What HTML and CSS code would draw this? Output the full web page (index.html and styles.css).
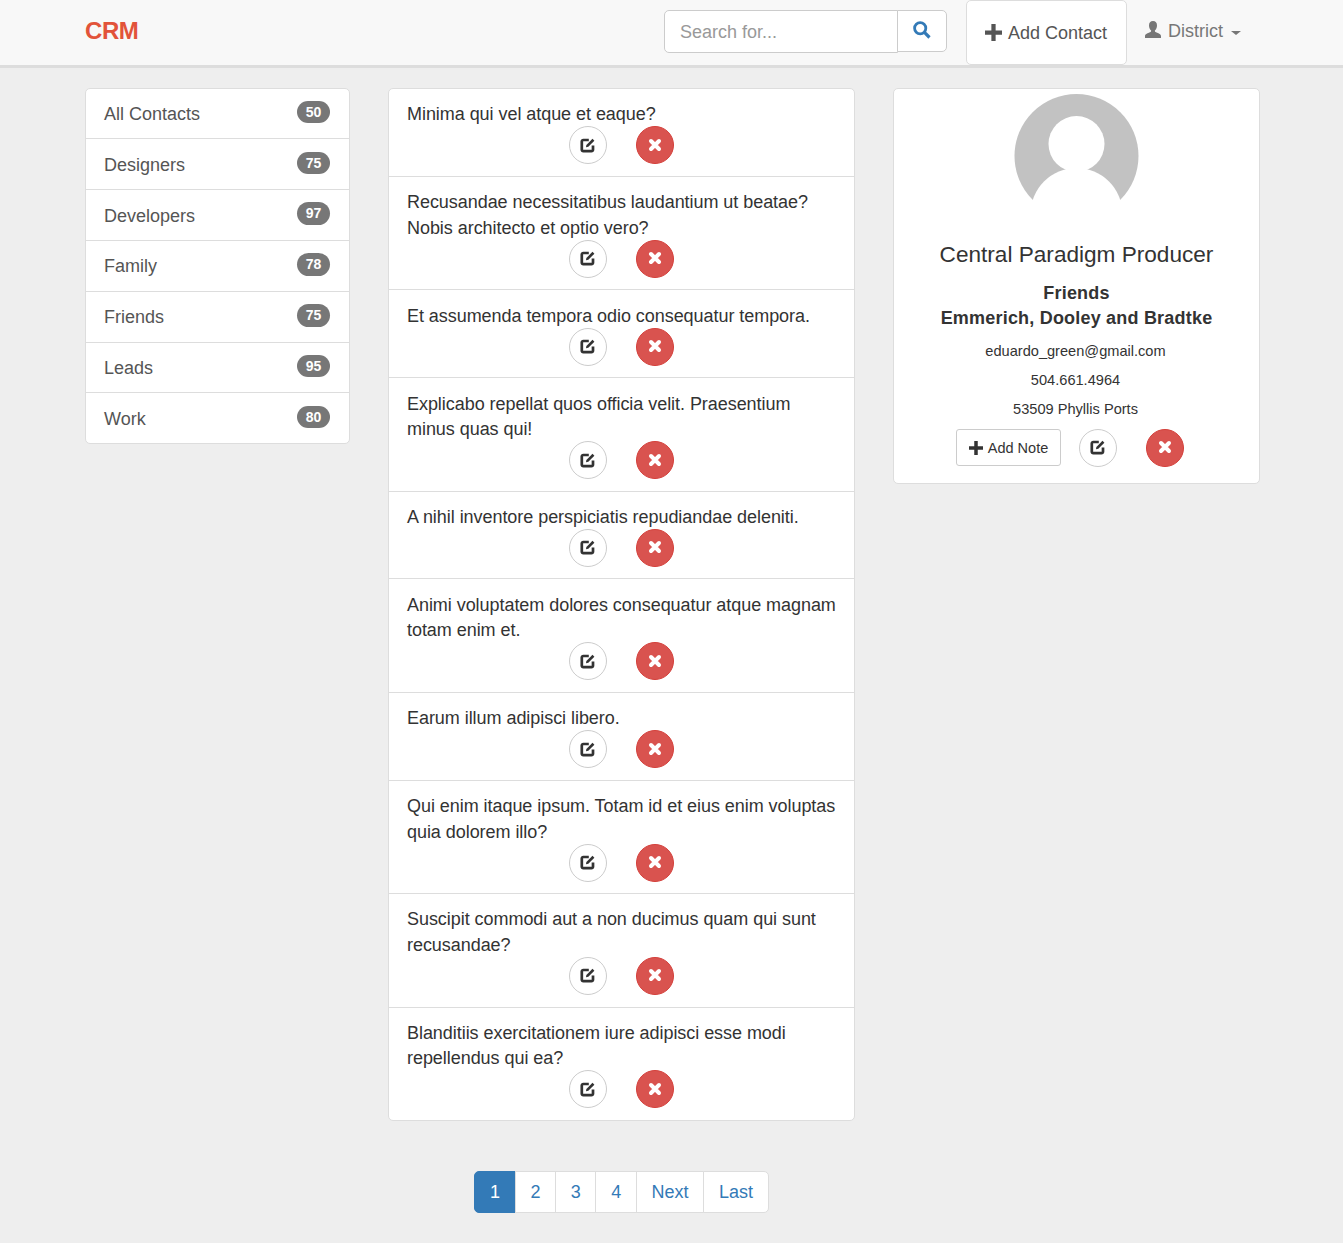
FILE: index.html
```html
<!DOCTYPE html>
<html lang="en">
<head>
<meta charset="utf-8">
<title>CRM</title>
<link rel="stylesheet" href="styles.css">
</head>
<body>
<svg class="sprites" width="0" height="0" aria-hidden="true">
  <symbol id="i-edit" viewBox="0 0 16 16">
    <path d="M8.800 3H3.300A1.500 1.500 0 0 0 1.800 4.500v8.200a1.500 1.500 0 0 0 1.500 1.500h8.200a1.500 1.500 0 0 0 1.500-1.500V8.500" fill="none" stroke="currentColor" stroke-width="2.700"/>
    <path d="M6 10.200l.4-2.300 6.100-6.100 1.900 1.900-6.100 6.100z" fill="currentColor"/>
  </symbol>
  <symbol id="i-x" viewBox="0 0 14 14">
    <path d="M3 3l8 8M11 3l-8 8" fill="none" stroke="currentColor" stroke-width="4" stroke-linecap="round"/>
  </symbol>
  <symbol id="i-plus" viewBox="0 0 16 16">
    <path d="M6 0h4v6h6v4h-6v6H6v-6H0V6h6z" fill="currentColor"/>
  </symbol>
  <symbol id="i-user" viewBox="0 0 18 18">
    <path d="M9 0c2.600 0 4 1.800 4 4.400 0 2-.8 3.900-1.900 4.900-.4.4-.3 1.200.3 1.600 1.800 1 5.600 1.600 5.600 4V17H1v-2.100c0-2.400 3.800-3 5.600-4 .6-.4.7-1.200.3-1.600C5.800 8.300 5 6.400 5 4.400 5 1.800 6.400 0 9 0z" fill="currentColor"/>
  </symbol>
  <symbol id="i-search" viewBox="0 0 18 18">
    <circle cx="7.200" cy="7.200" r="5.600" fill="none" stroke="currentColor" stroke-width="2.800"/>
    <path d="M11.200 11.200l5.300 5.300" fill="none" stroke="currentColor" stroke-width="3.200"/>
  </symbol>
</svg>

<header class="navbar">
  <a class="brand">CRM</a>
  <form class="search">
    <input class="search-input" type="text" placeholder="Search for...">
    <button class="search-btn" type="button"><svg class="icon-search"><use href="#i-search"/></svg></button>
  </form>
  <a class="add-contact"><svg class="icon-plus"><use href="#i-plus"/></svg>Add Contact</a>
  <a class="user-menu"><svg class="icon-user"><use href="#i-user"/></svg>District<span class="caret"></span></a>
</header>

<main class="layout">
  <ul class="groups">
    <li class="group"><span>All Contacts</span><span class="badge">50</span></li>
    <li class="group"><span>Designers</span><span class="badge">75</span></li>
    <li class="group"><span>Developers</span><span class="badge">97</span></li>
    <li class="group"><span>Family</span><span class="badge">78</span></li>
    <li class="group"><span>Friends</span><span class="badge">75</span></li>
    <li class="group"><span>Leads</span><span class="badge">95</span></li>
    <li class="group"><span>Work</span><span class="badge">80</span></li>
  </ul>

  <section class="center">
    <ul class="notes">
      <li class="note"><p>Minima qui vel atque et eaque?</p><div class="actions"><button class="circle edit" type="button"><svg class="icon-edit"><use href="#i-edit"/></svg></button><button class="circle del" type="button"><svg class="icon-x"><use href="#i-x"/></svg></button></div></li>
      <li class="note"><p>Recusandae necessitatibus laudantium ut beatae? Nobis architecto et optio vero?</p><div class="actions"><button class="circle edit" type="button"><svg class="icon-edit"><use href="#i-edit"/></svg></button><button class="circle del" type="button"><svg class="icon-x"><use href="#i-x"/></svg></button></div></li>
      <li class="note"><p>Et assumenda tempora odio consequatur tempora.</p><div class="actions"><button class="circle edit" type="button"><svg class="icon-edit"><use href="#i-edit"/></svg></button><button class="circle del" type="button"><svg class="icon-x"><use href="#i-x"/></svg></button></div></li>
      <li class="note"><p>Explicabo repellat quos officia velit. Praesentium minus quas qui!</p><div class="actions"><button class="circle edit" type="button"><svg class="icon-edit"><use href="#i-edit"/></svg></button><button class="circle del" type="button"><svg class="icon-x"><use href="#i-x"/></svg></button></div></li>
      <li class="note"><p>A nihil inventore perspiciatis repudiandae deleniti.</p><div class="actions"><button class="circle edit" type="button"><svg class="icon-edit"><use href="#i-edit"/></svg></button><button class="circle del" type="button"><svg class="icon-x"><use href="#i-x"/></svg></button></div></li>
      <li class="note"><p>Animi voluptatem dolores consequatur atque magnam totam enim et.</p><div class="actions"><button class="circle edit" type="button"><svg class="icon-edit"><use href="#i-edit"/></svg></button><button class="circle del" type="button"><svg class="icon-x"><use href="#i-x"/></svg></button></div></li>
      <li class="note"><p>Earum illum adipisci libero.</p><div class="actions"><button class="circle edit" type="button"><svg class="icon-edit"><use href="#i-edit"/></svg></button><button class="circle del" type="button"><svg class="icon-x"><use href="#i-x"/></svg></button></div></li>
      <li class="note"><p>Qui enim itaque ipsum. Totam id et eius enim voluptas quia dolorem illo?</p><div class="actions"><button class="circle edit" type="button"><svg class="icon-edit"><use href="#i-edit"/></svg></button><button class="circle del" type="button"><svg class="icon-x"><use href="#i-x"/></svg></button></div></li>
      <li class="note"><p>Suscipit commodi aut a non ducimus quam qui sunt recusandae?</p><div class="actions"><button class="circle edit" type="button"><svg class="icon-edit"><use href="#i-edit"/></svg></button><button class="circle del" type="button"><svg class="icon-x"><use href="#i-x"/></svg></button></div></li>
      <li class="note"><p>Blanditiis exercitationem iure adipisci esse modi repellendus qui ea?</p><div class="actions"><button class="circle edit" type="button"><svg class="icon-edit"><use href="#i-edit"/></svg></button><button class="circle del" type="button"><svg class="icon-x"><use href="#i-x"/></svg></button></div></li>
    </ul>
    <nav class="pagination">
      <a class="page active">1</a><a class="page">2</a><a class="page">3</a><a class="page">4</a><a class="page">Next</a><a class="page">Last</a>
    </nav>
  </section>

  <aside class="card">
    <svg class="avatar" viewBox="0 0 125 125" role="img" aria-label="avatar">
      <circle cx="62.500" cy="62" r="62" fill="#c2c2c2"/>
      <circle cx="62.500" cy="50" r="28" fill="#fff"/>
      <circle cx="62.500" cy="120" r="46" fill="#fff"/>
    </svg>
    <h3 class="title">Central Paradigm Producer</h3>
    <p class="strong">Friends<br>Emmerich, Dooley and Bradtke</p>
    <p class="detail">eduardo_green@gmail.com</p>
    <p class="detail">504.661.4964</p>
    <p class="detail">53509 Phyllis Ports</p>
    <div class="card-actions">
      <button class="add-note" type="button"><svg class="icon-plus-sm"><use href="#i-plus"/></svg>Add Note</button>
      <button class="circle edit" type="button"><svg class="icon-edit"><use href="#i-edit"/></svg></button>
      <button class="circle del" type="button"><svg class="icon-x"><use href="#i-x"/></svg></button>
    </div>
  </aside>
</main>
</body>
</html>
```
FILE: styles.css
```css
* { box-sizing: border-box; }
html, body { margin: 0; padding: 0; }
body {
  background: #eee;
  color: #333;
  font-family: "Liberation Sans", Arial, sans-serif;
  font-size: 18px;
  line-height: 1.42857;
}
.sprites { position: absolute; }
button { font-family: inherit; cursor: pointer; }
ul { list-style: none; margin: 0; padding: 0; }
p { margin: 0; }

.navbar {
  display: flex;
  align-items: flex-start;
  height: 68px;
  padding: 0 102px 0 85px;
  background: #f8f8f8;
  border-bottom: 3px solid #ddd;
}
.brand {
  margin-right: auto;
  padding-top: 16px;
  color: #e2533a;
  font-size: 24px;
  font-weight: 700;
  line-height: 30px;
  letter-spacing: -.4px;
}
.search { display: flex; align-items: flex-start; margin-top: 10px; }
.search-input {
  width: 234px;
  height: 43px;
  padding: 2px 15px 0;
  border: 1px solid #ccc;
  border-radius: 5px 0 0 5px;
  background: #fff;
  color: #555;
  font: inherit;
  outline: 0;
}
.search-input::placeholder { color: #999; opacity: 1; }
.search-btn {
  display: flex;
  align-items: center;
  justify-content: center;
  width: 50px;
  height: 42px;
  margin-left: -1px;
  padding: 0 0 2px;
  border: 1px solid #ccc;
  border-radius: 0 5px 5px 0;
  background: #fff;
  color: #337ab7;
}
.icon-search { width: 18px; height: 18px; }
.add-contact {
  display: flex;
  align-items: center;
  width: 161px;
  height: 65px;
  margin-left: 19px;
  padding: 2px 0 0 18px;
  background: #fff;
  border: 1px solid #ddd;
  border-radius: 5px;
  color: #555;
}
.icon-plus { width: 17px; height: 17px; margin: -2px 6px 0 0; }
.user-menu {
  display: flex;
  align-items: center;
  height: 63px;
  margin-left: 17px;
  color: #777;
}
.icon-user { width: 18px; height: 18px; margin: -3px 6px 0 0; }
.caret {
  width: 0;
  height: 0;
  margin: 2px 0 0 8px;
  border-top: 4px solid #777;
  border-left: 5px solid transparent;
  border-right: 5px solid transparent;
}

.layout {
  display: grid;
  grid-template-columns: 265px 467px 367px;
  column-gap: 38px;
  align-items: start;
  padding: 19.600px 0 30px 85px;
}

.groups, .notes, .card {
  background: #fff;
  border: 1px solid #ddd;
  border-radius: 5px;
}
.group {
  display: flex;
  justify-content: space-between;
  align-items: flex-start;
  padding: 13.400px 19px 10.700px 18px;
  color: #555;
  border-top: 1px solid #ddd;
}
.group:first-child { border-top: 0; }
.badge {
  margin-top: -1.100px;
  min-width: 33px;
  padding: 4px 8.500px;
  border-radius: 12px;
  background: #777;
  color: #fff;
  font-size: 14px;
  font-weight: 700;
  line-height: 14.500px;
  text-align: center;
}

.center { padding-top: .56px; }
.note {
  padding: 12px 15px 11.640px 18px;
  border-bottom: 1px solid #ddd;
}
.note:last-child { border-bottom: 0; }
.note p {
  padding-top: 1.300px;
  margin-bottom: -1.700px;
  line-height: 25.600px;
  letter-spacing: -.05px;
}
.actions { display: flex; justify-content: center; gap: 29px; margin-right: 3px; }
.circle {
  display: flex;
  align-items: center;
  justify-content: center;
  width: 38px;
  height: 38px;
  padding: 0;
  border-radius: 50%;
}
.edit { background: #fff; border: 1px solid #ccc; color: #333; }
.del { background: #d9534f; border: 1px solid #d43f3a; color: #fff; }
.icon-edit { width: 16px; height: 16px; margin: 0 1px 1px 0; }
.icon-x { width: 14px; height: 14px; margin-bottom: 1px; }

.pagination { display: flex; justify-content: center; margin-top: 50px; }
.page {
  margin-left: -1px;
  padding: 8.500px 14.700px 5.500px;
  background: #fff;
  border: 1px solid #ddd;
  color: #337ab7;
  line-height: 25.600px;
}
.page:first-child { margin-left: 0; border-radius: 5px 0 0 5px; }
.page:last-child { border-radius: 0 5px 5px 0; }
.page.active { background: #337ab7; border-color: #337ab7; color: #fff; }

.card {
  padding: 5px 15px 16px;
  text-align: center;
}
.avatar { display: block; width: 125px; height: 125px; margin: 0 auto; }
.title {
  margin: 19px 0 9px;
  font-size: 22.600px;
  font-weight: 400;
  line-height: 34px;
}
.strong { font-weight: 700; line-height: 25px; margin-bottom: 6px; letter-spacing: .2px; }
.detail { font-size: 14.600px; line-height: 29px; padding-right: 2px; }
.card-actions {
  display: flex;
  justify-content: center;
  align-items: flex-start;
  margin-top: 5px;
  padding-right: 13px;
}
.add-note {
  display: flex;
  align-items: center;
  height: 37px;
  margin-right: 18px;
  padding: 1px 12px 0;
  background: #fff;
  border: 1px solid #ccc;
  border-radius: 3px;
  color: #333;
  font-size: 14.500px;
}
.icon-plus-sm { width: 14px; height: 14px; margin-right: 5px; }
.card-actions .circle + .circle { margin-left: 29px; }
```
